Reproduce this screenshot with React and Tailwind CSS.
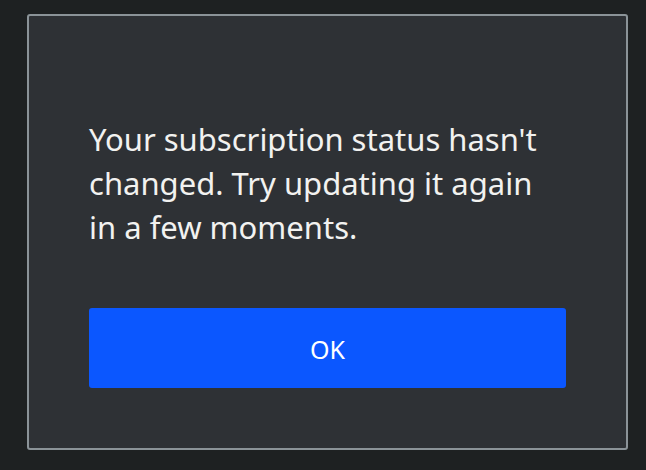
export default function App() {
  return (
    <div className="w-[646px] h-[470px] bg-[#1e2122] pt-[14px] pl-[27px]" style={{ fontFamily: '"Noto Sans", sans-serif' }}>
      <div className="w-[601px] h-[436px] border-2 border-[#8b9398] rounded-[3px] bg-[#2e3135] px-[60px] pt-[101px]">
        <p className="text-[31px] leading-[44px] text-[#f2f2f0]">
          Your subscription status hasn't changed. Try updating it again in a few moments.
        </p>
        <button className="mt-[59px] w-full h-[80px] rounded-[3px] bg-[#0b57ff] text-white text-[25px] pt-[3px] flex items-center justify-center">
          OK
        </button>
      </div>
    </div>
  );
}
